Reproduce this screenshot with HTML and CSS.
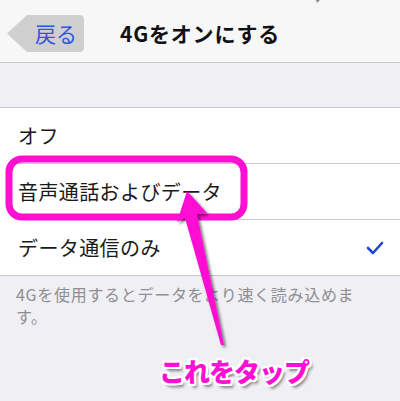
FILE: index.html
```html
<!DOCTYPE html>
<html lang="ja">
<head>
<meta charset="utf-8">
<link rel="stylesheet" href="styles.css">
</head>
<body>
<div class="screen">
  <header class="nav">
    <div class="back">
      <svg class="back-shape" width="80" height="40" viewBox="0 0 80 40"><path d="M20 0 H72 Q77 0 77 5 V32 Q77 37 72 37 H20 L0 18.5 Z" fill="#cfcfcf"/></svg>
      <span class="back-label">戻る</span>
    </div>
    <h1 class="title">4Gをオンにする</h1>
  </header>
  <div class="spacer"></div>
  <ul class="list">
    <li class="row">オフ</li>
    <li class="row">音声通話およびデータ</li>
    <li class="row">データ通信のみ
      <svg class="check" width="18" height="16" viewBox="0 0 18 16"><polyline points="2,8 7,13 16,3" fill="none" stroke="#1f45d8" stroke-width="2.6" stroke-linecap="round" stroke-linejoin="round"/></svg>
    </li>
  </ul>
  <p class="footer">4Gを使用するとデータをより速く読み込めます。</p>

  <svg class="overlay" width="400" height="401" viewBox="0 0 400 401">
    <defs>
      <filter id="sh" x="-20%" y="-20%" width="140%" height="140%">
        <feDropShadow dx="2" dy="2" stdDeviation="1.5" flood-color="#000" flood-opacity="0.55"/>
      </filter>
    </defs>
    <polygon points="316,0 320,0 317,3" fill="#8a8a8a"/>
    <rect x="9" y="159" width="235" height="58" rx="13" ry="13" fill="none" stroke="#ff0fd2" stroke-width="7"/>
    <polygon points="187,191 207,213 197,214 224,345 221,345 185,218 177,222" fill="#ff0fd2" filter="url(#sh)"/>
  </svg>
  <div class="tap">これをタップ</div>
</div>
</body>
</html>
```
FILE: styles.css
```css
* { box-sizing: border-box; }
html, body { margin: 0; padding: 0; }
body {
  width: 400px;
  height: 401px;
  overflow: hidden;
  background: #efeff4;
  font-family: "Noto Sans CJK JP", "Noto Sans", sans-serif;
  color: #111;
}
.screen {
  position: relative;
  width: 400px;
  height: 401px;
}
.nav {
  height: 63px;
  background: #f7f7f7;
  border-bottom: 1px solid #c8c7cc;
  display: flex;
  align-items: center;
  justify-content: center;
  position: relative;
}
.back {
  position: absolute;
  left: 7px;
  top: 15px;
  width: 80px;
  height: 37px;
}
.back-shape { position: absolute; left: 0; top: 0; }
.back-label {
  position: absolute;
  left: 28px;
  top: 3px;
  font-size: 21px;
  line-height: 30px;
  color: #2f55de;
}
.title {
  margin: 0;
  font-size: 21px;
  font-weight: 700;
  letter-spacing: 0.8px;
  color: #111;
  line-height: 30px;
  margin-top: 4px;
}
.spacer { height: 44px; }
.list {
  list-style: none;
  margin: 0;
  padding: 0 0 0 18px;
  background: #fff;
  border-top: 1px solid #c8c7cc;
  border-bottom: 1px solid #c8c7cc;
}
.row {
  height: 56px;
  display: flex;
  align-items: center;
  justify-content: space-between;
  padding-right: 16px;
  font-size: 20px;
  letter-spacing: 0.4px;
  color: #1a1a1a;
  border-bottom: 1px solid #c8c7cc;
}
.row:last-child { border-bottom: none; height: 55px; }
.footer {
  margin: 0;
  padding: 7px 0 0 16px;
  width: 362px;
  font-size: 16px;
  letter-spacing: 0.7px;
  line-height: 22px;
  color: #8e8e93;
}
.overlay {
  position: absolute;
  left: 0;
  top: 0;
  pointer-events: none;
}
.tap {
  position: absolute;
  left: 159px;
  top: 351px;
  font-size: 26px;
  font-weight: 900;
  line-height: 40px;
  color: #ff0fd2;
  letter-spacing: -1px;
  text-shadow:
    -2px 0 0 #fff, 2px 0 0 #fff, 0 -2px 0 #fff, 0 2px 0 #fff,
    -2px -2px 0 #fff, 2px -2px 0 #fff, -2px 2px 0 #fff, 2px 2px 0 #fff,
    3px 4px 3px rgba(0,0,0,0.45);
}
```
